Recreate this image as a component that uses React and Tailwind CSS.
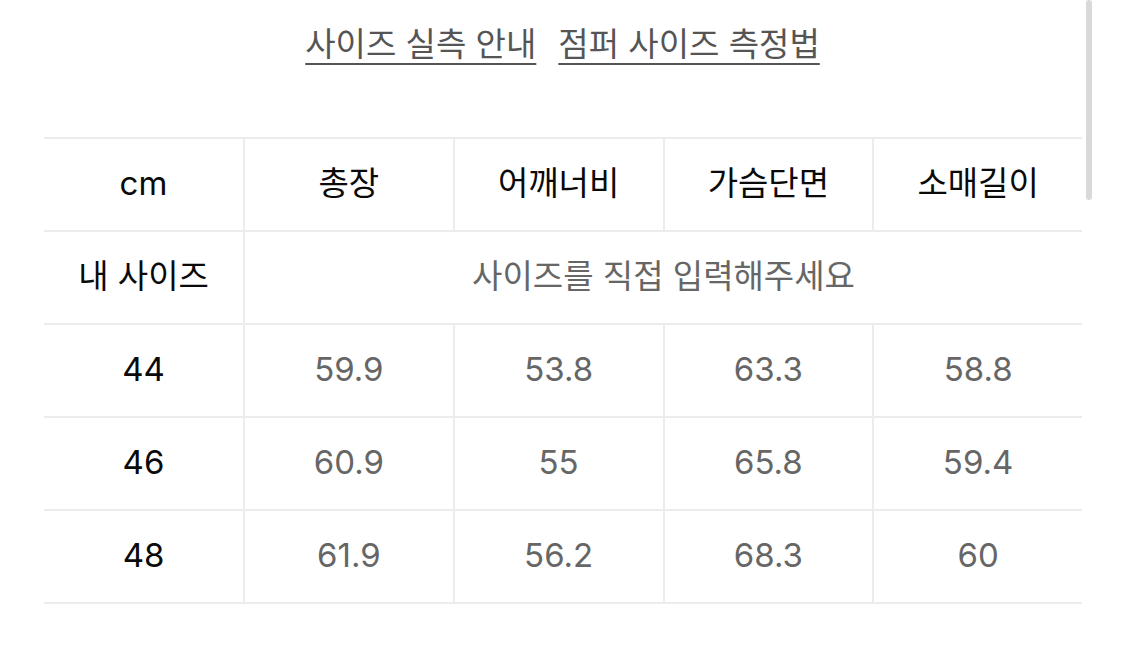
import React from "react";

const font = { fontFamily: '"Inter", "Noto Sans CJK KR", sans-serif' };

const rows = [
  ["44", "59.9", "53.8", "63.3", "58.8"],
  ["46", "60.9", "55", "65.8", "59.4"],
  ["48", "61.9", "56.2", "68.3", "60"],
];

function Cell({ children, first, className = "" }) {
  return (
    <div
      className={
        (first ? "w-[199px] " : "flex-1 border-l-2 border-[#ececec] ") +
        "flex items-center justify-center pb-[4px] " +
        className
      }
    >
      {children}
    </div>
  );
}

export default function App() {
  return (
    <div className="relative w-[1125px] h-[652px] bg-white overflow-hidden" style={font}>
      <div className="flex justify-center gap-[22px] pt-[22px] text-[33px] leading-[44px] text-[#555]">
        <span className="underline decoration-2 underline-offset-[7px]">사이즈 실측 안내</span>
        <span className="underline decoration-2 underline-offset-[7px]">점퍼 사이즈 측정법</span>
      </div>
      <div className="ml-[44px] w-[1038px] mt-[71px] border-t-2 border-[#ececec] text-[33px] leading-[40px]">
        <div className="flex h-[93px] border-b-2 border-[#ececec] text-[#0a0a0a]">
          <Cell first>cm</Cell>
          <Cell>총장</Cell>
          <Cell>어깨너비</Cell>
          <Cell>가슴단면</Cell>
          <Cell>소매길이</Cell>
        </div>
        <div className="flex h-[93px] border-b-2 border-[#ececec]">
          <Cell first className="text-[#0a0a0a]">내 사이즈</Cell>
          <Cell className="text-[#666]">사이즈를 직접 입력해주세요</Cell>
        </div>
        {rows.map((r) => (
          <div key={r[0]} className="flex h-[93px] border-b-2 border-[#ececec]">
            <Cell first className="text-[#0a0a0a]">{r[0]}</Cell>
            {r.slice(1).map((v, i) => (
              <Cell key={i} className="text-[#666]">{v}</Cell>
            ))}
          </div>
        ))}
      </div>
      <div className="absolute left-[1086px] top-0 w-[6px] h-[200px] rounded-full bg-[#d9d9d9]" />
    </div>
  );
}
